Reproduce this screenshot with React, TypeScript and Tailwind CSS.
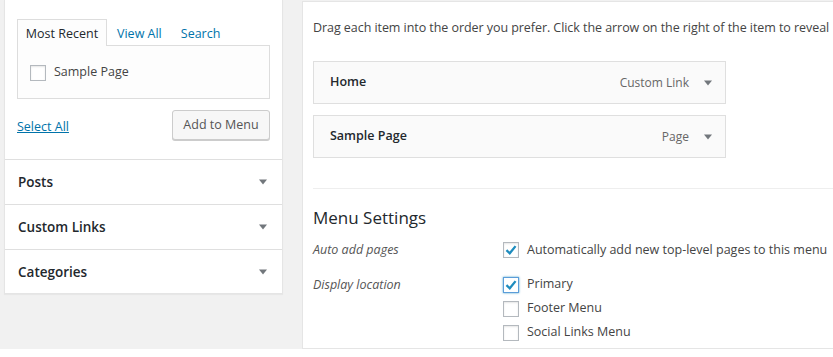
import React from "react";

const Arrow = () => (
  <svg width="10" height="6" viewBox="0 0 10 6" className="shrink-0">
    <path d="M1 0.5 L9 0.5 L5 5.5 Z" fill="#72777c" />
  </svg>
);

const Check = ({ checked, focus }: { checked?: boolean; focus?: boolean }) => (
  <span
    className={
      "flex h-4 w-4 shrink-0 items-center justify-center border bg-white " +
      (focus
        ? "border-[#5b9dd9] shadow-[0_0_2px_rgba(30,140,190,0.8)]"
        : "border-[#b4b9be] shadow-[inset_0_1px_2px_rgba(0,0,0,0.1)]")
    }
  >
    {checked && (
      <svg width="14" height="14" viewBox="0 0 16 16">
        <path d="M2.8 8.2 L6.6 11.8 L13.2 3.6" fill="none" stroke="#1e8cbe" strokeWidth="2.6" strokeLinejoin="miter" />
      </svg>
    )}
  </span>
);

const Section = ({ title }: { title: string }) => (
  <div className="flex h-[45px] items-center justify-between border-t border-[#dfdfdf] pl-[13px] pr-[14px]">
    <span className="text-[13.5px] font-semibold text-[#23282d]">{title}</span>
    <Arrow />
  </div>
);

const MenuItem = ({ title, kind }: { title: string; kind: string }) => (
  <div className="flex h-[43px] w-[413px] items-center justify-between border border-[#dfdfdf] bg-[#fafafa] pl-4 pr-3">
    <span className="text-[12.5px] font-semibold text-[#23282d]">{title}</span>
    <div className="flex items-center gap-[14px]">
      <span className="text-[12px] text-[#666]">{kind}</span>
      <Arrow />
    </div>
  </div>
);

export default function App() {
  return (
    <div
      className="flex h-[357px] w-[833px] flex-col overflow-hidden bg-[#f1f1f1] text-[12.5px] text-[#444]"
      style={{ fontFamily: '"Open Sans", "Noto Sans", Arial, sans-serif' }}
    >
      <div className="flex flex-1">
        {/* left column */}
        <div className="ml-1 h-[294px] w-[279px] shrink-0 border border-t-0 border-[#e5e5e5] bg-white shadow-[0_1px_1px_rgba(0,0,0,0.04)]">
          <div className="h-[159px] px-3 pt-[19px]">
            <div className="flex items-end">
              <div className="relative z-10 -mb-px flex h-[27px] w-[90px] items-center justify-center border border-b-0 border-[#ddd] bg-[#fdfdfd] pt-[2px] text-[#23282d]">
                Most Recent
              </div>
              <span className="ml-[10px] pb-[1px] text-[#0073aa]">View All</span>
              <span className="ml-[19px] pb-[1px] text-[#0073aa]">Search</span>
            </div>
            <div className="flex h-[54px] items-center gap-2 border border-[#ddd] bg-[#fdfdfd] pl-[12px] pt-[1px]">
              <Check />
              <span>Sample Page</span>
            </div>
            <div className="mt-[11px] flex items-center justify-between">
              <span className="pt-[5px] text-[#0073aa] underline">Select All</span>
              <button className="h-[30px] w-[98px] rounded-[3px] border border-[#ccc] bg-[#f7f7f7] text-[12.5px] text-[#555] shadow-[0_1px_0_#ccc]">
                Add to Menu
              </button>
            </div>
          </div>
          <Section title="Posts" />
          <Section title="Custom Links" />
          <Section title="Categories" />
        </div>

        {/* right column */}
        <div className="ml-[19px] mt-px min-w-0 flex-1 border border-r-0 border-[#e5e5e5] bg-white pl-[10px] pt-[15px]">
          <p className="whitespace-nowrap leading-[22px] tracking-[-0.06px]">
            Drag each item into the order you prefer. Click the arrow on the right of the item to reveal
          </p>
          <div className="mt-[22px] flex flex-col gap-[11px]">
            <MenuItem title="Home" kind="Custom Link" />
            <MenuItem title="Sample Page" kind="Page" />
          </div>
          <div className="mt-[30px] border-t border-[#eee] pt-[16px]">
            <h3 className="text-[17px] font-medium leading-[26px] text-[#23282d]">Menu Settings</h3>
            <div className="mt-[10px] flex items-center">
              <span className="w-[190px] italic text-[#555]">Auto add pages</span>
              <label className="flex items-center gap-2">
                <Check checked />
                <span>Automatically add new top-level pages to this menu</span>
              </label>
            </div>
            <div className="mt-[13px] flex">
              <span className="w-[190px] pt-[1px] italic leading-[22px] text-[#555]">Display location</span>
              <div className="flex flex-col gap-[2px] pt-[1px]">
                <label className="flex h-[22px] items-center gap-2">
                  <Check checked focus />
                  <span>Primary</span>
                </label>
                <label className="flex h-[22px] items-center gap-2">
                  <Check />
                  <span>Footer Menu</span>
                </label>
                <label className="flex h-[22px] items-center gap-2">
                  <Check />
                  <span>Social Links Menu</span>
                </label>
              </div>
            </div>
          </div>
        </div>
      </div>
      <div className="h-[8px] bg-white" />
    </div>
  );
}
